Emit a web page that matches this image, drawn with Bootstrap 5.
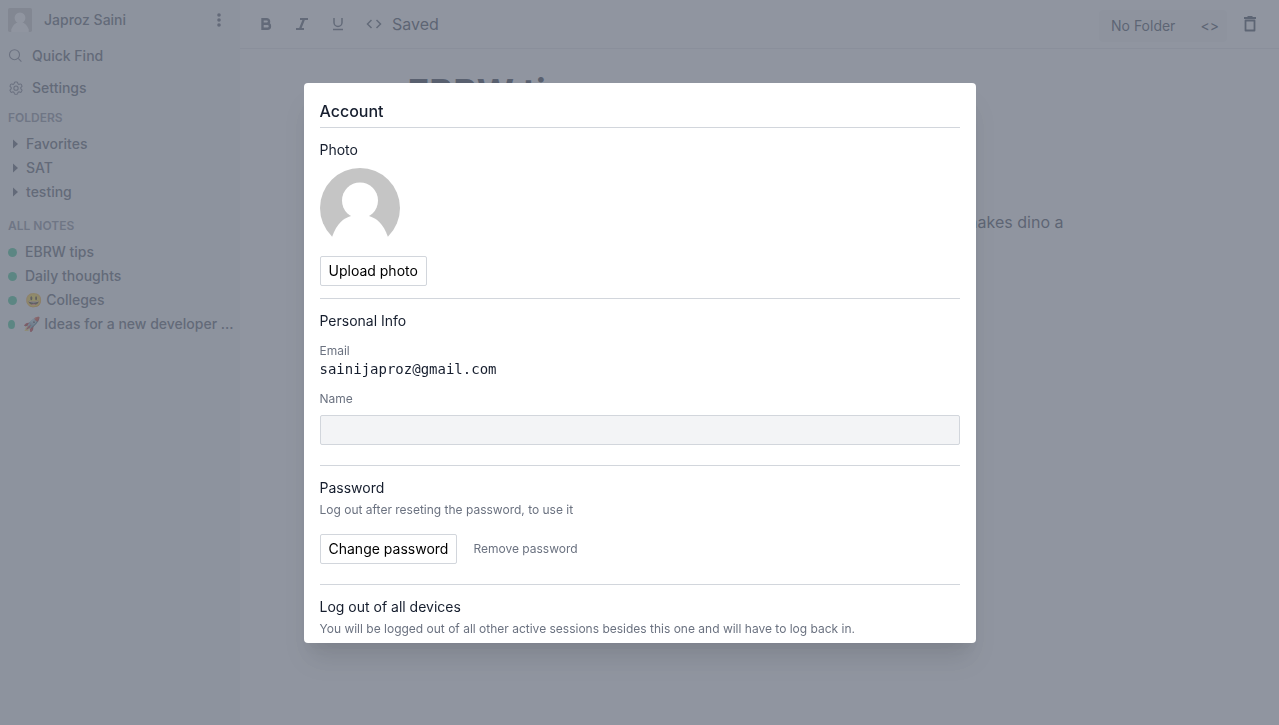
<!DOCTYPE html>
<html lang="en">
<head>
<meta charset="utf-8">
<meta name="viewport" content="width=device-width, initial-scale=1">
<title>Account</title>
<link href="https://cdn.jsdelivr.net/npm/bootstrap@5.3.0/dist/css/bootstrap.min.css" rel="stylesheet">
<style>
  body { font-family: Inter, "Noto Color Emoji", sans-serif; font-size: 14px; line-height: 20px; color: #1f2937; }
  button, input { font-family: inherit; }
  .sidebar { width: 240px; background: #f4f5f7; color: #4b5563; font-weight: 500; }
  .sidebar a { color: inherit; text-decoration: none; }
  .side-head { height: 40px; }
  .side-row { height: 32px; }
  .side-item { height: 24px; }
  .side-title { font-size: 12px; line-height: 28px; font-weight: 600; color: #7c8493; margin: 0; }
  .muted-icon { color: #6b7280; }
  .dot { width: 9px; height: 9px; border-radius: 50%; background: #31c48d; flex-shrink: 0; }
  .dot-narrow { width: 7px; }
  .plain-btn { background: none; border: 0; padding: 0; color: inherit; display: flex; }
  .toolbar { height: 49px; border-bottom: 1px solid #e5e7eb; font-size: 16px; color: #374151; }
  .tool-btn { width: 36px; height: 36px; align-items: center; justify-content: center; color: #4b5563; }
  .folder-btn { width: 128px; height: 32px; background: #f6f7f8; border: 0; border-radius: 4px; font-size: 14px; color: #374151; }
  .trash-btn { margin: 0 14px 0 16px; }
  .editor { max-width: 704px; font-size: 16px; line-height: 28px; color: #374151; }
  .editor h1 { font-size: 36px; line-height: 38px; font-weight: 700; color: #252f3f; }
  .editor p { padding-right: 48px; margin-top: 97px; }
  .overlay { background: rgba(107, 114, 128, .75); }
  .account-dialog { max-width: 672px; }
  .account-content { height: 560px; border: 0; border-radius: 4px; overflow: hidden; box-shadow: 0 20px 25px -5px rgba(0,0,0,.1), 0 10px 10px -5px rgba(0,0,0,.04); }
  .account-content h2 { font-size: 16px; line-height: 24px; font-weight: 500; color: #161e2e; }
  .account-content h3 { font-size: 14px; line-height: 20px; font-weight: 400; color: #161e2e; margin: 0; }
  .rule { border-bottom: 1px solid #d2d6dc; }
  .section { padding: 12px 0 20px; }
  .section-photo { padding-bottom: 12px; }
  .hint { font-size: 12px; line-height: 16px; color: #6b7280; }
  .box-btn { height: 30px; padding: 0 8px; background: #fff; border: 1px solid #d2d6dc; border-radius: 2px; color: #000; font-size: 14px; line-height: 20px; }
  .email { font-family: "DejaVu Sans Mono", monospace; color: #161e2e; }
  .name-input { height: 30px; background: #f3f4f6; border: 1px solid #d2d6dc; border-radius: 2px; font-size: 14px; padding: 4px 8px; }
  .mt-12 { margin-top: 12px; }
</style>
</head>
<body>
<div class="d-flex vh-100 overflow-hidden">
  <aside class="sidebar flex-shrink-0">
    <div class="side-head d-flex align-items-center px-2">
      <svg width="24" height="24" viewBox="0 0 80 80" role="img" aria-label="Profile photo"><rect width="80" height="80" rx="6" fill="#c5c5c5"/><circle cx="40" cy="33" r="18" fill="#fff"/><path d="M11 72C16 57 27 47 40 47s24 10 29 25v8H11z" fill="#fff"/></svg>
      <span class="ms-1 ps-2">Japroz Saini</span>
      <button class="plain-btn ms-auto me-1" aria-label="More"><svg width="18" height="18" viewBox="0 0 18 18" fill="currentColor"><circle cx="9" cy="4" r="1.800"/><circle cx="9" cy="9" r="1.800"/><circle cx="9" cy="14" r="1.800"/></svg></button>
    </div>
    <nav>
      <a href="#" class="side-row d-flex align-items-center gap-2 px-2">
        <svg class="muted-icon" width="16" height="16" viewBox="0 0 16 16" fill="none" stroke="currentColor" stroke-width="1.1"><circle cx="6.500" cy="6.700" r="5"/><path d="m10.200 10.400 3.200 3.200"/></svg>Quick Find</a>
      <a href="#" class="side-row d-flex align-items-center gap-2 px-2">
        <svg class="muted-icon" width="16" height="16" viewBox="0 0 24 24" fill="none" stroke="currentColor" stroke-width="1.6" stroke-linejoin="round"><path d="M9.6 3.9c.2-.6.7-1 1.3-1h2.2c.6 0 1.1.4 1.3 1l.3 1.3c.1.4.4.7.7.9l.5.3c.4.2.8.2 1.2.1l1.2-.5c.5-.2 1.2 0 1.5.5l1.1 2c.3.5.2 1.2-.3 1.5l-1 .9c-.3.2-.5.6-.5 1v.6c0 .4.2.8.5 1l1 .9c.5.3.6 1 .3 1.5l-1.1 2c-.3.5-1 .7-1.5.5l-1.2-.5c-.4-.1-.8-.1-1.2.1l-.5.3c-.3.2-.6.5-.7.9l-.3 1.3c-.2.6-.7 1-1.3 1h-2.2c-.6 0-1.1-.4-1.3-1l-.3-1.3c-.1-.4-.4-.7-.7-.9l-.5-.3c-.4-.2-.8-.2-1.2-.1l-1.2.5c-.5.2-1.2 0-1.5-.5l-1.1-2c-.3-.5-.2-1.2.3-1.5l1-.9c.3-.2.5-.6.5-1v-.6c0-.4-.2-.8-.5-1l-1-.9c-.5-.3-.6-1-.3-1.500l1.100-2c.3-.5 1-.7 1.500-.5l1.200.5c.4.1.8.1 1.200-.1l.5-.3c.3-.2.6-.5.7-.9z"/><circle cx="12" cy="12.200" r="3.200"/></svg>Settings</a>
      <h2 class="side-title px-2">FOLDERS</h2>
      <a href="#" class="side-item d-flex align-items-center px-2"><svg class="me-1" width="14" height="10" viewBox="0 0 14 10" fill="currentColor"><path d="M5 .5 10 5 5 9.500z"/></svg>Favorites</a>
      <a href="#" class="side-item d-flex align-items-center px-2"><svg class="me-1" width="14" height="10" viewBox="0 0 14 10" fill="currentColor"><path d="M5 .5 10 5 5 9.500z"/></svg>SAT</a>
      <a href="#" class="side-item d-flex align-items-center px-2"><svg class="me-1" width="14" height="10" viewBox="0 0 14 10" fill="currentColor"><path d="M5 .5 10 5 5 9.500z"/></svg>testing</a>
      <h2 class="side-title px-2 mt-2">ALL NOTES</h2>
      <a href="#" class="side-item d-flex align-items-center gap-2 px-2"><span class="dot"></span>EBRW tips</a>
      <a href="#" class="side-item d-flex align-items-center gap-2 px-2"><span class="dot"></span>Daily thoughts</a>
      <a href="#" class="side-item d-flex align-items-center gap-2 px-2"><span class="dot"></span><span>😃 Colleges</span></a>
      <a href="#" class="side-item d-flex align-items-center gap-2 px-2"><span class="dot dot-narrow"></span><span class="text-nowrap">🚀 Ideas for a new developer ...</span></a>
    </nav>
  </aside>
  <main class="flex-grow-1">
    <div class="toolbar d-flex align-items-center px-2">
      <button class="plain-btn tool-btn" aria-label="Bold"><svg width="12" height="14" viewBox="0 0 12 14" fill="none" stroke="currentColor" stroke-width="2.400"><path d="M2.500 2.200h4.300a2.200 2.200 0 0 1 0 4.500H2.500m0 0h4.900a2.500 2.500 0 0 1 0 5.100H2.500zM2.500 1v12"/></svg></button>
      <button class="plain-btn tool-btn" aria-label="Italic"><svg width="12" height="14" viewBox="0 0 12 14" fill="none" stroke="currentColor" stroke-width="2.200"><path d="M4 2h8M0 12h8M8 2 4 12"/></svg></button>
      <button class="plain-btn tool-btn" aria-label="Underline"><svg width="12" height="14" viewBox="0 0 12 14" fill="none" stroke="currentColor" stroke-width="1.500"><path d="M2 1v4.500a4 4 0 0 0 8 0V1M1 12.500h10"/></svg></button>
      <button class="plain-btn tool-btn" aria-label="Code"><svg width="16" height="12" viewBox="0 0 16 12" fill="none" stroke="currentColor" stroke-width="1.500"><path d="M5.500 2 1.500 6l4 4M10.500 2l4 4-4 4"/></svg></button>
      <span>Saved</span>
      <button class="folder-btn ms-auto d-flex align-items-center justify-content-between mt-1 ps-1 pe-2"><span class="ps-2">No Folder</span><span>&lt;&gt;</span></button>
      <button class="plain-btn trash-btn" aria-label="Delete"><svg width="14" height="18" viewBox="0 0 14 18" fill="none" stroke="currentColor" stroke-width="1.800"><path d="M1 3h12M4.500 2h5"/><path d="M2.500 5.500h9v10h-9z" stroke-linejoin="round"/></svg></button>
    </div>
    <article class="editor mx-auto pt-4">
      <h1 class="mb-0">EBRW tips</h1>
      <p class="text-end">makes dino a</p>
    </article>
  </main>
</div>

<div class="modal show d-block overlay" tabindex="-1" role="dialog" aria-modal="true" aria-labelledby="account-title">
  <div class="modal-dialog modal-dialog-centered account-dialog">
    <div class="modal-content account-content p-3">
      <h2 id="account-title" class="rule pb-1 mb-0">Account</h2>
      <section class="section section-photo rule">
        <h3>Photo</h3>
        <svg class="d-block my-2" width="80" height="80" viewBox="0 0 80 80" role="img" aria-label="Profile photo"><circle cx="40" cy="40" r="40" fill="#c5c5c5"/><circle cx="40" cy="32.500" r="18" fill="#fff"/><path d="M12 69C17 55 24 50 31 48h18c7 2 14 7 19 21v11H12z" fill="#fff"/></svg>
        <button class="box-btn d-block">Upload photo</button>
      </section>
      <section class="section rule">
        <h3>Personal Info</h3>
        <div class="hint mt-12">Email</div>
        <div class="email">sainijaproz@gmail.com</div>
        <label class="hint d-block mt-12" for="name">Name</label>
        <input id="name" type="text" class="name-input d-block w-100 mt-2">
      </section>
      <section class="section rule">
        <h3>Password</h3>
        <p class="hint mt-1 mb-3">Log out after reseting the password, to use it</p>
        <div class="d-flex align-items-center gap-3">
          <button class="box-btn">Change password</button>
          <button class="plain-btn hint">Remove password</button>
        </div>
      </section>
      <section class="section">
        <h3>Log out of all devices</h3>
        <p class="hint mt-1 mb-0">You will be logged out of all other active sessions besides this one and will have to log back in.</p>
      </section>
    </div>
  </div>
</div>
<script src="https://cdn.jsdelivr.net/npm/bootstrap@5.3.0/dist/js/bootstrap.bundle.min.js"></script>
</body>
</html>
